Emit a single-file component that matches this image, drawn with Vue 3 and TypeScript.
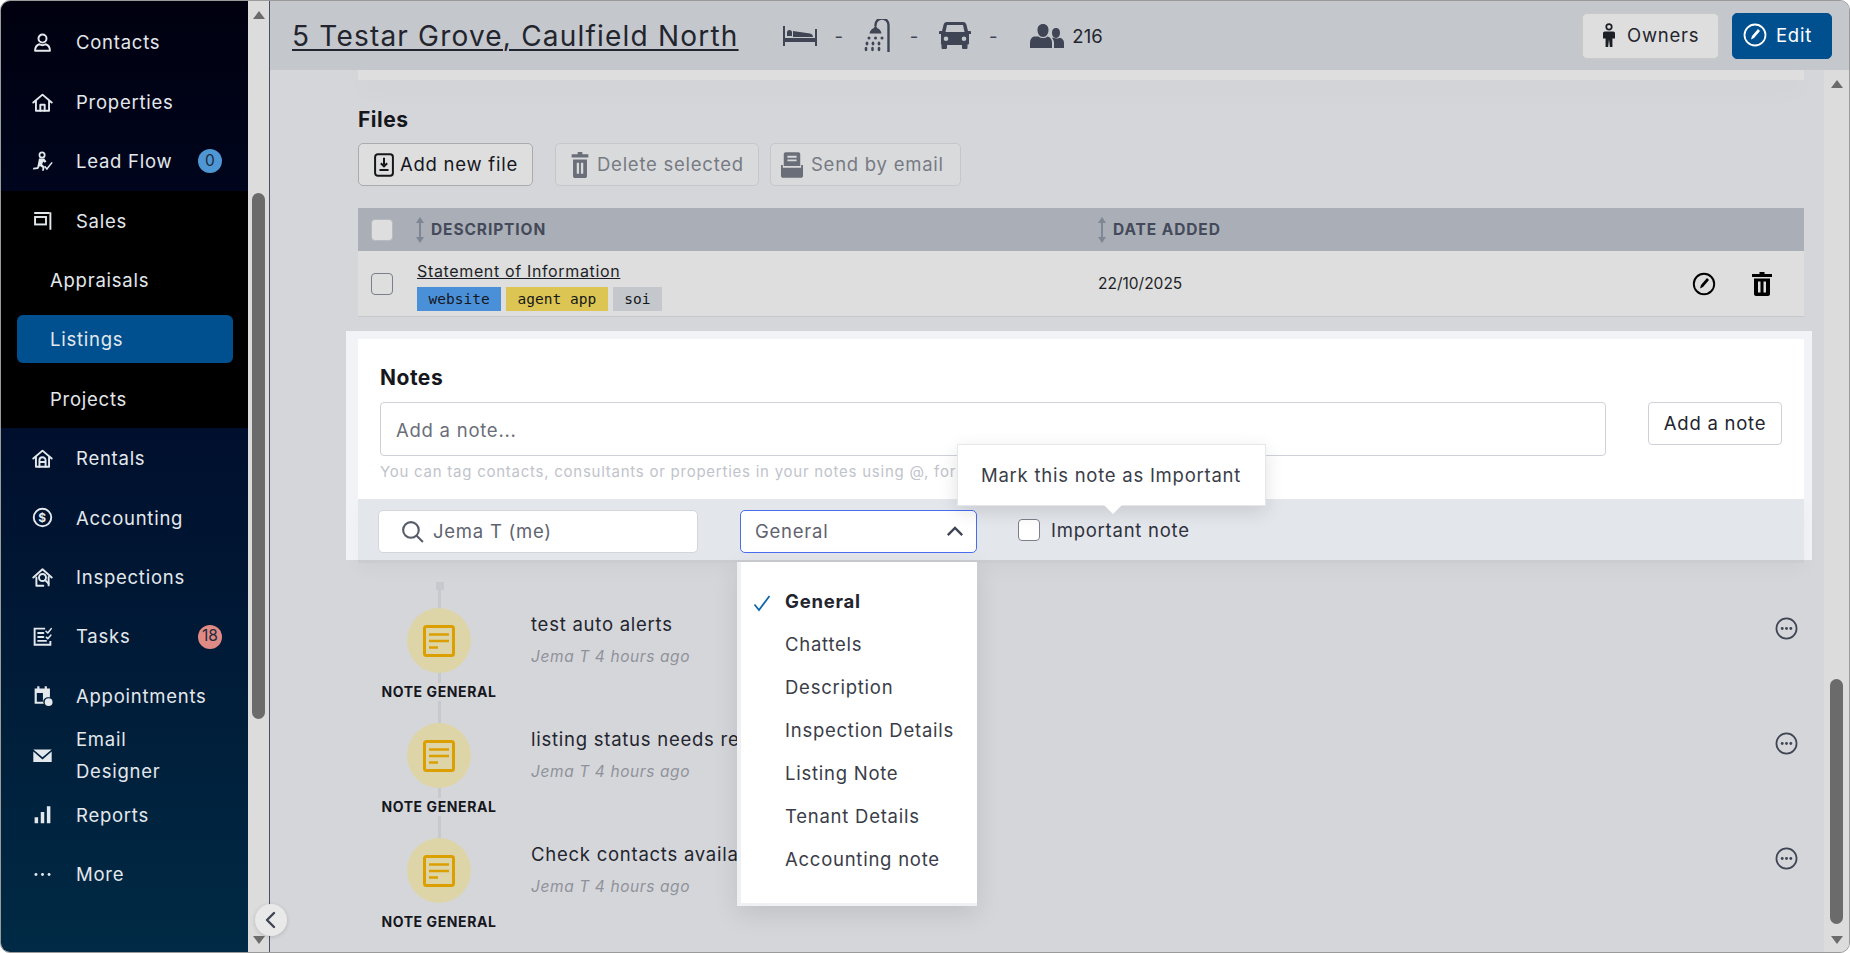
<script setup lang="ts">
interface NavItem {
  label: string
  icon?: string
  badge?: string
  badgeClass?: string
  sub?: boolean
  active?: boolean
}

const s = 'fill="none" stroke="currentColor" stroke-width="2.2" stroke-linecap="round" stroke-linejoin="round"'

const icons: Record<string, string> = {
  contacts: `<g ${s}><circle cx="12" cy="7.5" r="4.6"/><path d="M3.5 21.5c0-4 1.6-6.5 5-7.5 2 1.2 5 1.2 7 0 3.400 1 5 3.500 5 7.500z"/></g>`,
  properties: `<g ${s}><path d="M1.500 12 12 3l10.500 9"/><path d="M4.500 10.500V21.500h15V10.500"/><path d="M9.500 21.500V14.500h5v7"/></g>`,
  lead: `<circle cx="11.500" cy="4.500" r="3" fill="none" stroke="currentColor" stroke-width="2"/><path fill="currentColor" d="M8 8.500h6l2.500 3.500-2 1.500-1.500-1.500-1.500 3 3 3-1 4.500h-2l.5-3.500-3-2-2 3.500-6 .5.500-2 4.500-.5z"/><path d="M14.500 17.500l2.500 3 6-7.500" fill="none" stroke="currentColor" stroke-width="1.800"/>`,
  sales: `<g ${s}><path d="M2.500 3.500h17.500" stroke-linecap="butt"/><path d="M21 2.500v20" stroke-linecap="butt"/><rect x="3.500" y="8" width="12.500" height="8.500" stroke-linejoin="miter"/></g>`,
  rentals: `<g ${s}><path d="M1.500 12 12 3l10.500 9"/><path d="M4.500 10.500V21.500h15V10.500"/><path d="M8.500 21.500V14a3.500 3.500 0 0 1 7 0v7.500M8.500 16h7"/></g>`,
  accounting: `<g ${s}><circle cx="12" cy="12" r="10"/></g><text x="12" y="16.800" text-anchor="middle" font-size="13.500" font-weight="700" font-family="Inter, sans-serif" fill="currentColor">$</text>`,
  inspections: `<g ${s}><path d="M1.500 12 12 2.500 22.500 12"/><path d="M5 12v9.500h8M19 11.500v9.500"/><circle cx="12" cy="12" r="4"/><path d="M15 15l4 4"/></g>`,
  tasks: `<g ${s}><path d="M15 3H3v18.500h18V17" stroke-linejoin="miter" stroke-linecap="butt"/><path d="M7 8h6M7 12.500h6M7 17h9"/><path d="M16 6l2 2 4-5M16.500 13l1.500 1.500 3.500-4" stroke-width="1.800"/></g>`,
  appointments: `<path fill="currentColor" fill-rule="evenodd" d="M3 4h3V1.500h2.500V4h6V1.500H17V4h3.500v10h-2.800a5 5 0 0 0-4.200 7.500H3zM5.500 9v10h7V9z"/><circle cx="19" cy="19.500" r="4.500" fill="currentColor"/>`,
  email: `<path fill="currentColor" d="M1.500 5h21L12 14zM1.500 7.500 12 16.500 22.500 7.500V19.500h-21z"/>`,
  reports: `<path fill="currentColor" d="M3 15h4v7H3zM10 9h4v13h-4zM17 2.500h4V22h-4z"/>`,
  more: `<g fill="currentColor"><circle cx="4.500" cy="12" r="1.700"/><circle cx="12" cy="12" r="1.700"/><circle cx="19.500" cy="12" r="1.700"/></g>`
}

const mainNav: NavItem[] = [
  { label: 'Contacts', icon: 'contacts' },
  { label: 'Properties', icon: 'properties' },
  { label: 'Lead Flow', icon: 'lead', badge: '0', badgeClass: 'blue' }
]
const salesNav: NavItem[] = [
  { label: 'Sales', icon: 'sales' },
  { label: 'Appraisals', sub: true },
  { label: 'Listings', sub: true, active: true },
  { label: 'Projects', sub: true }
]
const restNav: NavItem[] = [
  { label: 'Rentals', icon: 'rentals' },
  { label: 'Accounting', icon: 'accounting' },
  { label: 'Inspections', icon: 'inspections' },
  { label: 'Tasks', icon: 'tasks', badge: '18', badgeClass: 'red' },
  { label: 'Appointments', icon: 'appointments' },
  { label: 'Email Designer', icon: 'email' },
  { label: 'Reports', icon: 'reports' },
  { label: 'More', icon: 'more' }
]

const notes = ['test auto alerts', 'listing status needs rev', 'Check contacts availab']
const noteTypes = ['General', 'Chattels', 'Description', 'Inspection Details', 'Listing Note', 'Tenant Details', 'Accounting note']
</script>

<template>
  <div class="window">
    <aside class="side">
      <nav class="nav">
        <a v-for="item in mainNav" :key="item.label" class="nav-item">
          <svg class="nav-icon" viewBox="0 0 24 24" v-html="icons[item.icon!]"></svg>
          <span class="nav-label">{{ item.label }}</span>
          <span v-if="item.badge" class="badge" :class="item.badgeClass">{{ item.badge }}</span>
        </a>
        <div class="sales">
          <a v-for="item in salesNav" :key="item.label" class="nav-item" :class="{ sub: item.sub, active: item.active }">
            <svg v-if="item.icon" class="nav-icon" viewBox="0 0 24 24" v-html="icons[item.icon]"></svg>
            <span class="nav-label">{{ item.label }}</span>
          </a>
        </div>
        <a v-for="item in restNav" :key="item.label" class="nav-item">
          <svg class="nav-icon" viewBox="0 0 24 24" v-html="icons[item.icon!]"></svg>
          <span class="nav-label" :class="{ wrap: item.icon === 'email' }">{{ item.label }}</span>
          <span v-if="item.badge" class="badge" :class="item.badgeClass">{{ item.badge }}</span>
        </a>
      </nav>
    </aside>

    <div class="scrollbar side-scrollbar">
      <span class="arrow up"></span>
      <span class="thumb"></span>
      <span class="arrow down"></span>
    </div>

    <main class="main">
      <button class="collapse" aria-label="Collapse">
        <svg viewBox="0 0 24 24" width="24" height="24"><path d="M15 5l-7 7 7 7" fill="none" stroke="#3f4554" stroke-width="2.400" stroke-linecap="round" stroke-linejoin="round"/></svg>
      </button>

      <header class="topbar">
        <h1 class="address">5 Testar Grove, Caulfield North</h1>
        <div class="facts">
          <svg class="fact bed" viewBox="0 0 34 20"><path fill="#3f4554" d="M0 0h2v12h30V3h2v17h-2v-4H2v4H0z"/><path fill="#3f4554" d="M4 10V6.500a2.500 2.500 0 0 1 5 0V10zM10 5l17 2.500c1.600.3 3 1.500 3 3.500H10z"/></svg>
          <span class="dash">-</span>
          <svg class="fact shower" viewBox="0 0 28 33"><path fill="none" stroke="#3f4554" stroke-width="2.400" d="M11.500 7V6a6.500 6.500 0 0 1 13 0v27"/><path fill="#3f4554" d="M11.500 7c1 0 1.500 1 1.500 2 2.500.8 4 2.500 4.500 5.500H5.500c.5-3 2-4.700 4.500-5.500 0-1 .5-2 1.500-2z"/><g fill="#3f4554"><circle cx="5" cy="19" r="1.500"/><circle cx="11.500" cy="19" r="1.500"/><circle cx="18" cy="19" r="1.500"/><ellipse cx="3" cy="24.500" rx="1.400" ry="2"/><ellipse cx="9" cy="24.500" rx="1.400" ry="2"/><ellipse cx="15" cy="24.500" rx="1.400" ry="2"/><ellipse cx="2" cy="30" rx="1.400" ry="2.200"/><ellipse cx="8.500" cy="30" rx="1.400" ry="2.200"/><ellipse cx="15" cy="30" rx="1.400" ry="2.200"/></g></svg>
          <span class="dash">-</span>
          <svg class="fact car" viewBox="0 0 32 27"><path fill="#3f4554" fill-rule="evenodd" d="M8 0h16c2 0 3 1 3.500 3L29 9h2c.6 0 1 .4 1 1v2h-2v9c0 1-.5 1.500-1.500 1.500v3c0 1-.5 1.500-1.500 1.500h-2.500c-1 0-1.500-.5-1.500-1.500V23H8v2.500C8 26.500 7.500 27 6.500 27H4c-1 0-1.500-.5-1.500-1.500v-3C1.500 22.500 2 21 2 21v-9H0v-2c0-.6.4-1 1-1h2l1.500-6C5 1 6 0 8 0zM8 3 6.500 10h19L24 3zM7 14.500a2.300 2.300 0 1 0 0 4.600 2.300 2.300 0 0 0 0-4.600zm18 0a2.300 2.300 0 1 0 0 4.600 2.300 2.300 0 0 0 0-4.600z"/></svg>
          <span class="dash">-</span>
          <svg class="fact people" viewBox="0 0 34 24"><path fill="#3f4554" d="M13 0c3.500 0 5.500 2.500 5.500 6s-2 7-5.500 7-5.500-3.500-5.500-7S9.500 0 13 0zM8.500 12.500c2.500 2 6.500 2 9 0 3 .8 4.500 3 4.500 6.500v5H0v-5c0-3.500 1.500-5.700 4-6.500zM26 4c2.600 0 4 2 4 4.800S28.600 14 26 14s-4-2.400-4-5.200S23.400 4 26 4zM30 13.800c2.600.8 4 2.500 4 5.200v5H24v-5c0-2-.8-3.800-2-5 .5-.2 1-.3 1.300-.4 1.500 1.100 4.900 1.300 6.700.2z"/></svg>
          <span class="count">216</span>
        </div>
        <div class="top-actions">
          <button class="btn owners">
            <svg viewBox="0 0 14 28" width="12" height="24"><circle cx="7" cy="4.500" r="3.200" fill="none" stroke="#1d1f26" stroke-width="2"/><path fill="#1d1f26" d="M2 10h10c1 0 2 1 2 2v6h-3v10H8l-1-9-1 9H3V18H0v-6c0-1 1-2 2-2z"/></svg>
            Owners
          </button>
          <button class="btn edit">
            <svg viewBox="0 0 24 24" width="24" height="24"><circle cx="12" cy="12" r="10.500" fill="none" stroke="#fff" stroke-width="1.800"/><path d="M8 16.500 9 13l6-7 2 2-6 7z" fill="#fff"/></svg>
            Edit
          </button>
        </div>
      </header>

      <div class="body">
        <div class="content">
          <div class="band"></div>

          <section class="files">
            <h2>Files</h2>
            <div class="file-actions">
              <button class="fbtn">
                <svg viewBox="0 0 22 26" width="20" height="24"><rect x="1.200" y="1.200" width="19.600" height="23.600" rx="3" fill="none" stroke="#15171d" stroke-width="2.200"/><path d="M11 5v9M7.500 11l3.500 3.500 3.500-3.500M6 18.500h10" fill="none" stroke="#15171d" stroke-width="2.200"/></svg>
                Add new file
              </button>
              <button class="fbtn off del">
                <svg viewBox="0 0 18 28" width="18" height="26"><path fill="#6a6e78" d="M6.500 0h5v2.500H18V6H0V2.500h6.500zM1.500 8h15v18c0 1-1 2-2 2h-11c-1 0-2-1-2-2zM5.500 11.500v12h2.500v-12zM10 11.500v12h2.500v-12z"/></svg>
                Delete selected
              </button>
              <button class="fbtn off send">
                <svg viewBox="0 0 24 28" width="22" height="26"><path fill="#6a6e78" fill-rule="evenodd" d="M5 0h14c1 0 2 1 2 2v13H3V2c0-1 1-2 2-2zM7 4v2h10V4zM7 8v2h10V8zM0 14l2 0v3h20v-3h2v12c0 1-1 2-2 2H2c-1 0-2-1-2-2z"/></svg>
                Send by email
              </button>
            </div>

            <div class="table">
              <div class="thead">
                <span class="check"></span>
                <span class="th desc">
                  <svg class="sort" viewBox="0 0 10 26"><path d="M5 0l4 6H6v14h3l-4 6-4-6h3V6H1z" fill="#7f8694"/></svg>
                  DESCRIPTION
                </span>
                <span class="th date">
                  <svg class="sort" viewBox="0 0 10 26"><path d="M5 0l4 6H6v14h3l-4 6-4-6h3V6H1z" fill="#7f8694"/></svg>
                  DATE ADDED
                </span>
              </div>
              <div class="trow">
                <span class="check"></span>
                <div class="cell-desc">
                  <a class="file-link">Statement of Information</a>
                  <div class="tags">
                    <span class="tag t-blue">website</span>
                    <span class="tag t-yellow">agent app</span>
                    <span class="tag t-grey">soi</span>
                  </div>
                </div>
                <span class="cell-date">22/10/2025</span>
                <div class="row-actions">
                  <svg viewBox="0 0 24 24" width="24" height="24"><circle cx="12" cy="12" r="10.200" fill="none" stroke="#000" stroke-width="1.900"/><path d="M8 16.500 9 13l6-7 2 2-6 7z" fill="#000"/></svg>
                  <svg viewBox="0 0 20 24" width="20" height="24"><path fill="#000" d="M7.500 0h5v2H20v3H0V2h7.500zM2 6.500h16V22c0 1-1 2-2 2H4c-1 0-2-1-2-2zM6 9.500v11h2.500v-11zM11.500 9.500v11H14v-11z"/></svg>
                </div>
              </div>
            </div>
          </section>

          <section class="panel">
            <div class="panel-top">
              <h2>Notes</h2>
              <div class="note-entry">
                <div class="note-input">Add a note...</div>
                <button class="add-note">Add a note</button>
              </div>
              <p class="hint">You can tag contacts, consultants or properties in your notes using @, for</p>
            </div>
            <div class="panel-bar">
              <div class="search">
                <svg viewBox="0 0 24 24" width="25" height="25"><circle cx="10.500" cy="10.500" r="7.500" fill="none" stroke="#565b68" stroke-width="2"/><path d="M16 16l6 6" stroke="#565b68" stroke-width="2"/></svg>
                Jema T (me)
              </div>
              <div class="select">
                General
                <svg viewBox="0 0 20 12" width="18" height="11"><path d="M2 10l8-8 8 8" fill="none" stroke="#3f4554" stroke-width="2.600"/></svg>
                <ul class="menu">
                  <li v-for="(type, i) in noteTypes" :key="type" :class="{ chosen: i === 0 }">
                    <svg v-if="i === 0" class="tick" viewBox="0 0 18 18" width="18" height="18"><path d="M1.500 10.500l4.500 5.500L16.500 2" fill="none" stroke="#0f66ad" stroke-width="1.800"/></svg>
                    {{ type }}
                  </li>
                </ul>
              </div>
              <label class="important">
                <span class="check white"></span>
                Important note
                <span class="tooltip">Mark this note as Important</span>
              </label>
            </div>
          </section>

          <section class="timeline">
            <article v-for="note in notes" :key="note" class="note">
              <div class="note-type">
                <span class="note-dot">
                  <svg viewBox="0 0 32 32" width="32" height="32"><rect x="1.500" y="1.500" width="29" height="29" rx="2" fill="none" stroke="#dc9f00" stroke-width="3"/><path d="M6 9.500h20M6 16h20M6 22.500h9" stroke="#dc9f00" stroke-width="2.600"/></svg>
                </span>
                <span class="note-tag">NOTE GENERAL</span>
              </div>
              <div class="note-text">
                <p class="note-title">{{ note }}</p>
                <p class="note-meta">Jema T 4 hours ago</p>
              </div>
              <svg class="note-more" viewBox="0 0 24 24" width="23" height="23"><circle cx="12" cy="12" r="10.500" fill="none" stroke="#3f4554" stroke-width="1.800"/><g fill="#3f4554"><circle cx="7.500" cy="12" r="1.500"/><circle cx="12" cy="12" r="1.500"/><circle cx="16.500" cy="12" r="1.500"/></g></svg>
            </article>
          </section>
        </div>

        <div class="scrollbar main-scrollbar">
          <span class="arrow up"></span>
          <span class="thumb"></span>
          <span class="arrow down"></span>
        </div>
      </div>
    </main>
  </div>
</template>

<style>
html,
body {
  margin: 0;
  background: #fff;
}
</style>

<style scoped>
* {
  box-sizing: border-box;
}

.window {
  display: flex;
  width: 1850px;
  height: 953px;
  overflow: hidden;
  border: 1px solid #9a9a9a;
  border-radius: 10px;
  font-family: Inter, "Open Sans", sans-serif;
  font-size: 18.500px;
  letter-spacing: 0.750px;
  color: #23252e;
  background: #d5d6da;
}

.side {
  width: 247px;
  flex: none;
  background: linear-gradient(180deg, #00000f 0%, #000a28 35%, #002a45 100%);
  color: #e3e8ec;
}

.nav {
  padding-top: 11.500px;
}

.nav-item {
  display: flex;
  align-items: center;
  height: 59.400px;
  padding-top: 1px;
  padding-left: 31px;
  line-height: 32.500px;
}

.nav-icon {
  width: 21px;
  height: 21px;
  flex: none;
  margin-right: 23px;
}

.nav-label.wrap {
  width: 120px;
}

.badge {
  display: flex;
  align-items: center;
  justify-content: center;
  height: 24px;
  min-width: 24px;
  margin-left: auto;
  margin-right: 26px;
  padding: 0 3px;
  border-radius: 12px;
  font-size: 15.500px;
  letter-spacing: 0;
  color: #1d2b3c;
}

.badge.blue {
  background: #4f97d4;
}

.badge.red {
  background: #e08a85;
}

.sales {
  background: #000;
}

.nav-item.sub {
  position: relative;
  padding-left: 49px;
}

.nav-item.active::before {
  content: "";
  position: absolute;
  left: 16px;
  right: 15px;
  top: 6px;
  bottom: 6px;
  border-radius: 6px;
  background: #00508f;
}

.nav-item.active .nav-label {
  position: relative;
}

.scrollbar {
  position: relative;
  flex: none;
  background: #dcdcdc;
}

.side-scrollbar {
  width: 22px;
  border-right: 1px solid #4a4f63;
}

.arrow {
  position: absolute;
  left: 50%;
  width: 0;
  height: 0;
  margin-left: -6px;
  border-left: 6px solid transparent;
  border-right: 6px solid transparent;
}

.arrow.up {
  top: 10px;
  border-bottom: 8px solid #6b6b6b;
}

.arrow.down {
  bottom: 8px;
  border-top: 8px solid #6b6b6b;
}

.thumb {
  position: absolute;
  left: 4px;
  width: 13px;
  top: 192px;
  height: 526px;
  border-radius: 7px;
  background: #6b6b6b;
}

.main {
  position: relative;
  flex: 1;
  min-width: 0;
  display: flex;
  flex-direction: column;
}

.collapse {
  position: absolute;
  left: -15px;
  top: 903px;
  z-index: 5;
  display: flex;
  align-items: center;
  justify-content: center;
  width: 32px;
  height: 32px;
  padding: 0;
  border: none;
  border-radius: 50%;
  background: #e9e9e9;
  box-shadow: 0 1px 4px rgba(0, 0, 0, 0.15);
}

.topbar {
  display: flex;
  align-items: center;
  flex: none;
  height: 69px;
  padding: 0 17px 0 22px;
  background: #c4c7cc;
}

.address {
  margin: 0;
  font-size: 28px;
  letter-spacing: 1.200px;
  font-weight: 400;
  line-height: 32px;
  color: #23252e;
  text-decoration: underline;
  text-decoration-thickness: 2px;
  text-underline-offset: 3px;
  white-space: nowrap;
}

.facts {
  display: flex;
  align-items: center;
  margin-left: 44px;
}

.fact {
  flex: none;
}

.bed {
  width: 34px;
  height: 20px;
}

.shower {
  width: 28px;
  height: 33px;
  margin-left: 20px;
}

.car {
  width: 32px;
  height: 27px;
  margin-left: 20px;
}

.people {
  width: 34px;
  height: 24px;
  margin-left: 32px;
}

.dash {
  margin-left: 18px;
  color: #3f4554;
}

.count {
  margin-left: 8px;
  letter-spacing: 0;
}

.top-actions {
  display: flex;
  gap: 13px;
  margin-left: auto;
}

.btn {
  display: flex;
  align-items: center;
  height: 46px;
  padding-bottom: 2px;
  border-radius: 5px;
  font: inherit;
  letter-spacing: inherit;
  border: 1px solid #c9c9c9;
}

.owners {
  width: 137px;
  gap: 12px;
  padding-left: 20px;
  background: #dedede;
  color: #23252e;
}

.edit {
  width: 100px;
  gap: 9px;
  padding-left: 10px;
  background: #00508f;
  border-color: #00508f;
  color: #fff;
}

.body {
  flex: 1;
  display: flex;
  min-height: 0;
}

.content {
  flex: 1;
  min-width: 0;
  padding: 0 20px 0 88px;
}

.main-scrollbar {
  width: 25px;
}

.main-scrollbar .thumb {
  left: 6px;
  top: 609px;
  height: 245px;
}

.band {
  height: 10px;
  background: #dedede;
  box-shadow: 0 10px 24px rgba(0, 0, 0, 0.03);
}

.files h2,
.panel h2 {
  margin: 0;
  font-size: 21px;
  font-weight: 700;
  line-height: 26px;
  letter-spacing: 0.500px;
  color: #15171d;
}

.files h2 {
  padding-top: 27px;
}

.file-actions {
  display: flex;
  margin-top: 10px;
}

.fbtn {
  display: flex;
  align-items: center;
  height: 43px;
  padding: 0 0 2px 15px;
  gap: 6px;
  width: 175px;
  border: 1px solid #a9abaf;
  border-radius: 5px;
  background: #dedede;
  font: inherit;
  letter-spacing: inherit;
  color: #15171d;
}

.fbtn svg {
  margin-top: 2px;
}

.fbtn.off {
  border-color: #c6c7ca;
  background: #d9dadc;
  color: #777a83;
}

.del {
  width: 204px;
  margin-left: 22px;
  gap: 8px;
}

.send {
  width: 191px;
  margin-left: 11px;
  padding-left: 10px;
  gap: 8px;
}

.table {
  margin-top: 22px;
}

.thead {
  display: flex;
  align-items: center;
  height: 43px;
  padding-left: 13px;
  background: #aaaeb6;
}

.th {
  display: flex;
  align-items: center;
  gap: 6px;
  font-size: 15.500px;
  letter-spacing: 0.900px;
  font-weight: 700;
  color: #444a5a;
}

.sort {
  width: 10px;
  height: 26px;
}

.desc {
  margin-left: 22px;
  width: 682px;
}

.check {
  display: block;
  flex: none;
  width: 22px;
  height: 22px;
  border: 1px solid #7b7f8a;
  border-radius: 4px;
  background: #dedede;
}

.check.white {
  background: #fff;
}

.thead .check {
  background: #dedede;
  border-color: #b8bac0;
}

.trow {
  display: flex;
  align-items: center;
  height: 66px;
  padding-left: 13px;
  background: #dedede;
  border-bottom: 1px solid #c7c8cb;
}

.cell-desc {
  width: 681px;
  margin-left: 24px;
  padding-top: 3px;
}

.file-link {
  display: block;
  font-size: 16px;
  letter-spacing: 0.650px;
  line-height: 22px;
  text-decoration: underline;
  color: #1d1f26;
}

.tags {
  display: flex;
  gap: 5px;
  margin-top: 5px;
}

.tag {
  height: 24px;
  padding: 0 11.500px;
  font-family: "DejaVu Sans Mono", monospace;
  font-size: 14.500px;
  letter-spacing: 0;
  line-height: 24px;
  color: #15171d;
}

.t-blue {
  background: #4a90d9;
}

.t-yellow {
  background: #dcc552;
}

.t-grey {
  background: #c4c7cc;
}

.cell-date {
  font-size: 15.500px;
  letter-spacing: 0;
  color: #1d1f26;
}

.row-actions {
  display: flex;
  align-items: center;
  gap: 36px;
  margin-left: auto;
  margin-right: 32px;
}

.panel {
  margin: 14px -8px 0 -12px;
  padding: 8px 8px 0 12px;
  background: #f1f3f7;
}

.panel-top {
  height: 160px;
  padding: 26px 22px 0 22px;
  background: #fff;
}

.note-entry {
  display: flex;
  align-items: flex-start;
  margin-top: 11px;
}

.note-input {
  flex: 1;
  height: 54px;
  padding: 0 15px;
  border: 1px solid #cfd1d8;
  border-radius: 4px;
  line-height: 55px;
  color: #6a6e78;
}

.add-note {
  width: 134px;
  height: 43px;
  margin-left: 42px;
  padding-bottom: 3px;
  border: 1px solid #cfd1d8;
  border-radius: 4px;
  background: #fff;
  font: inherit;
  letter-spacing: inherit;
  color: #23252e;
}

.hint {
  margin: 6px 0 0;
  font-size: 15px;
  letter-spacing: 0.750px;
  line-height: 19px;
  color: #bfc3cb;
  white-space: nowrap;
}

.panel-bar {
  position: relative;
  display: flex;
  align-items: center;
  height: 61px;
  padding-left: 20px;
  background: #e3e6eb;
  box-shadow: 0 3px 0 #cbccd0, 0 10px 20px rgba(0, 0, 0, 0.03);
}

.search {
  display: flex;
  align-items: center;
  gap: 8px;
  width: 320px;
  height: 43px;
  margin-top: 3px;
  padding-left: 21px;
  border: 1px solid #d4d6dc;
  border-radius: 5px;
  background: #fff;
  color: #5f6370;
}

.select {
  position: relative;
  display: flex;
  align-items: center;
  justify-content: space-between;
  width: 237px;
  height: 43px;
  margin-top: 3px;
  margin-left: 42px;
  padding: 0 12px 0 14px;
  border: 1px solid #4a6cf0;
  border-radius: 5px;
  background: #fff;
  color: #5f6370;
}

.menu {
  position: absolute;
  z-index: 3;
  left: -4px;
  right: -1px;
  top: 51px;
  margin: 0;
  padding: 18px 0 22px;
  list-style: none;
  background: #fff;
  border-left: 4px solid #eef0f3;
  border-bottom: 3px solid #eef0f3;
  box-shadow: 0 8px 24px rgba(0, 0, 0, 0.1);
  color: #3a3d48;
}

.menu li {
  position: relative;
  height: 43px;
  padding-left: 44px;
  line-height: 43px;
  white-space: nowrap;
}

.menu li.chosen {
  font-weight: 700;
  color: #23252e;
}

.tick {
  position: absolute;
  left: 12px;
  top: 14px;
}

.important {
  position: relative;
  display: flex;
  align-items: center;
  gap: 11px;
  margin-left: 41px;
  color: #2f323c;
}

.tooltip {
  position: absolute;
  z-index: 3;
  left: -61px;
  bottom: 35px;
  width: 309px;
  height: 62px;
  padding-left: 23px;
  line-height: 60px;
  background: #fff;
  border: 1px solid #e6e7eb;
  box-shadow: 0 6px 18px rgba(0, 0, 0, 0.12);
  white-space: nowrap;
  color: #3a3d48;
}

.tooltip::after {
  content: "";
  position: absolute;
  left: 146px;
  top: 100%;
  border-left: 9px solid transparent;
  border-right: 9px solid transparent;
  border-top: 9px solid #fff;
}

.timeline {
  position: relative;
  padding-top: 48px;
}

.timeline::before {
  content: "";
  position: absolute;
  left: 80px;
  top: 30px;
  width: 3px;
  height: 250px;
  background: #c7c9ce;
}

.timeline::after {
  content: "";
  position: absolute;
  left: 77.500px;
  top: 22px;
  width: 8px;
  height: 8px;
  background: #c7c9ce;
}

.note {
  position: relative;
  z-index: 1;
  display: flex;
  height: 115px;
}

.note-type {
  display: flex;
  flex-direction: column;
  align-items: center;
  flex: none;
  width: 162px;
}

.note-dot {
  display: flex;
  align-items: center;
  justify-content: center;
  width: 64px;
  height: 65px;
  border-radius: 50%;
  background: #ddd5a8;
}

.note-tag {
  margin-top: 10px;
  padding: 0 2px;
  font-size: 14px;
  letter-spacing: 0.600px;
  font-weight: 700;
  line-height: 18px;
  color: #15171d;
  background: #d5d6da;
  white-space: nowrap;
}

.note-text {
  margin-left: 11px;
  padding-top: 4px;
}

.note-text p {
  margin: 0;
}

.note-title {
  line-height: 24px;
  color: #23252e;
}

.note-meta {
  margin-top: 11px !important;
  font-size: 15.500px;
  letter-spacing: 0.600px;
  font-style: italic;
  line-height: 20px;
  color: #8f929a;
}

.note-more {
  margin-left: auto;
  margin-right: 6px;
  margin-top: 9px;
}
</style>
